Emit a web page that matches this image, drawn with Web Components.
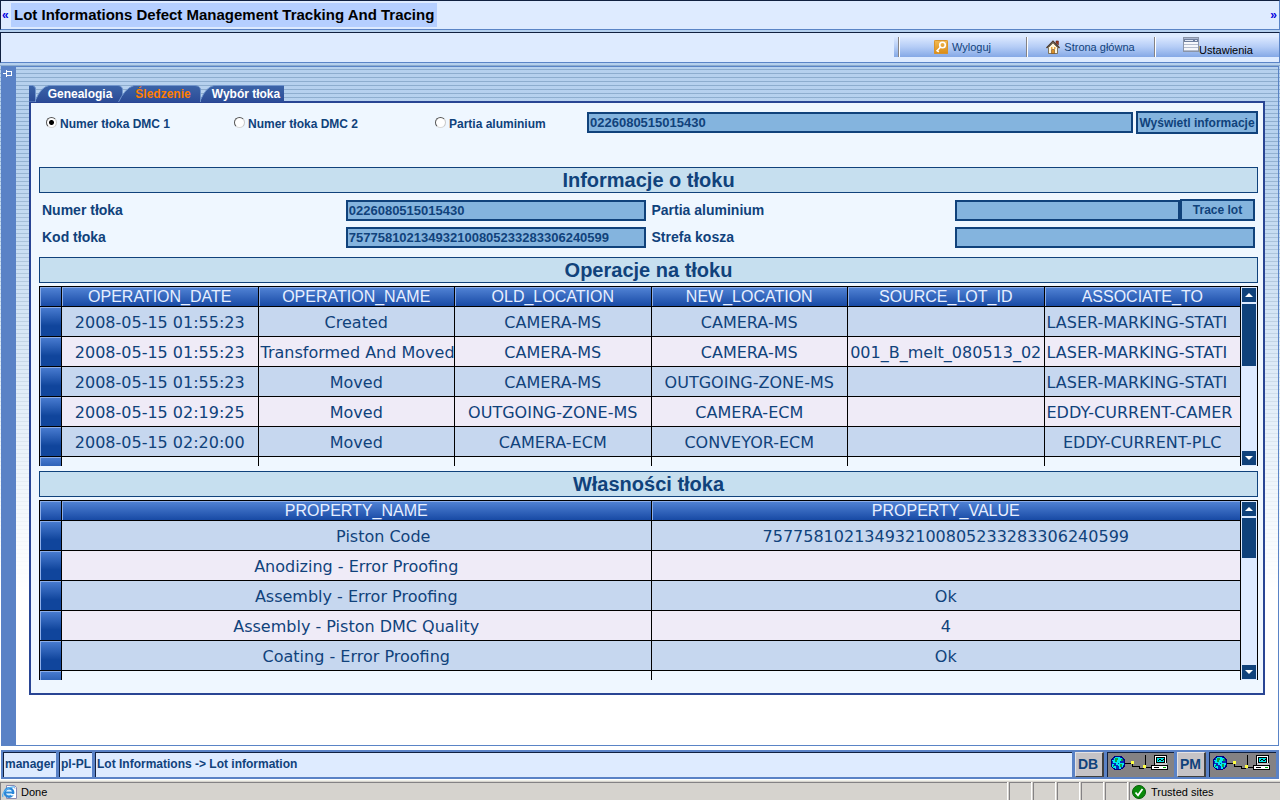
<!DOCTYPE html>
<html lang="pl">
<head>
<meta charset="utf-8">
<meta name="viewport" content="width=device-width, initial-scale=1">
<title>Lot Informations Defect Management Tracking And Tracing</title>
<style>
  :root {
    --ink: #10427b;
    --edge: #5a84c6;
    --dark: #102040;
    --pale: #deebff;
    --field: #84b4de;
  }
  html { height: 100%; }
  body {
    margin: 0;
    min-height: 100%;
    display: flex;
    flex-direction: column;
    font: 12px/16px "Liberation Sans", Arial, sans-serif;
    color: var(--ink);
    background-color: #fff;
    background-image:
      linear-gradient(rgba(255,255,255,0) 0, rgba(255,255,255,.05) 150px, rgba(255,255,255,.25) 230px, rgba(255,255,255,.7) 440px, #fff 590px),
      repeating-linear-gradient(rgba(80,120,160,0) 0, rgba(80,120,160,0) 1px, rgba(80,120,160,.42) 1px, rgba(80,120,160,.42) 2px, rgba(80,120,160,0) 2px, rgba(80,120,160,0) 4px),
      linear-gradient(#b4cfee, #b4d3ee);
    background-size: 100% 590px;
    background-repeat: no-repeat;
  }
</style>
</head>
<body>

<title-bar>Lot Informations Defect Management Tracking And Tracing</title-bar>
<tool-bar>
  <tool-link icon="key">Wyloguj</tool-link>
  <tool-link icon="home">Strona główna</tool-link>
  <tool-link icon="list" plain>Ustawienia</tool-link>
</tool-bar>

<work-area>
  <tab-strip></tab-strip>
  <lot-panel>
    <search-row></search-row>
    <section-title>Informacje o tłoku</section-title>
    <lot-fields></lot-fields>
    <section-title>Operacje na tłoku</section-title>
    <data-grid thumb="62">
      <script type="application/json">
      {"head":["OPERATION_DATE","OPERATION_NAME","OLD_LOCATION","NEW_LOCATION","SOURCE_LOT_ID","ASSOCIATE_TO"],
       "rows":[
        ["2008-05-15 01:55:23","Created","CAMERA-MS","CAMERA-MS","","LASER-MARKING-STATI"],
        ["2008-05-15 01:55:23","Transformed And Moved","CAMERA-MS","CAMERA-MS","001_B_melt_080513_02","LASER-MARKING-STATI"],
        ["2008-05-15 01:55:23","Moved","CAMERA-MS","OUTGOING-ZONE-MS","","LASER-MARKING-STATI"],
        ["2008-05-15 02:19:25","Moved","OUTGOING-ZONE-MS","CAMERA-ECM","","EDDY-CURRENT-CAMER"],
        ["2008-05-15 02:20:00","Moved","CAMERA-ECM","CONVEYOR-ECM","","EDDY-CURRENT-PLC"],
        ["","","","","",""]]}
      </script>
    </data-grid>
    <section-title class="next">Własności tłoka</section-title>
    <data-grid thumb="40">
      <script type="application/json">
      {"head":["PROPERTY_NAME","PROPERTY_VALUE"],
       "rows":[
        ["Piston Code","757758102134932100805233283306240599"],
        ["Anodizing - Error Proofing",""],
        ["Assembly - Error Proofing","Ok"],
        ["Assembly - Piston DMC Quality","4"],
        ["Coating - Error Proofing","Ok"],
        ["",""]]}
      </script>
    </data-grid>
  </lot-panel>
</work-area>

<info-bar></info-bar>
<status-bar></status-bar>

<script>
const icons = {
  key: `<svg width="14" height="14" viewBox="0 0 14 14"><defs><linearGradient id="g" x2="0" y2="1"><stop stop-color="#f3bc55"/><stop offset="1" stop-color="#d98a14"/></linearGradient></defs><rect width="14" height="14" rx="1" fill="url(#g)"/><rect x=".5" y=".5" width="13" height="13" rx="1" fill="none" stroke="#d8932c"/><circle cx="8.5" cy="5" r="2.8" fill="none" stroke="#fff" stroke-width="1.6"/><path d="M6.600 7 2.500 11.200M3.200 10.600l1.600 1.200" stroke="#fff" stroke-width="1.600" fill="none"/></svg>`,
  home: `<svg width="14" height="14" viewBox="0 0 14 14"><path d="M10 1h2.4v4L10 3z" fill="#a33a1c" stroke="#5d1f10" stroke-width=".6"/><path d="M2.5 7.5 7 3l4.500 4.500V13.500h-9z" fill="#fff6dc" stroke="#6c5a3a" stroke-width=".8"/><path d="M.5 8 7 1.300 13.500 8" fill="none" stroke="#4b3a2a" stroke-width="1.500"/><path d="M5 7h1.500v2H5zm3 0h1.500v2H8z" fill="#e9a53c"/><path d="M5.500 9.500h3v4h-3z" fill="#d9902a" stroke="#7a4a16" stroke-width=".6"/></svg>`,
  list: `<svg width="16" height="15" viewBox="0 0 16 15"><path fill="#8a94a8" d="M0 0h16v15H0z"/><path fill="#f6f7fb" d="M1 5h14v9H1z"/><path fill="#6f7f9e" d="M1 1h14v4H1z"/><path fill="#a9b6d0" d="M1 1h14v1H1z"/><path fill="#e4eaf6" d="M2 3h8v1H2zM12 3h2v1h-2z"/><path fill="#b4bccd" d="M1 7h14v1H1zm0 3h14v1H1zm0 3h14v1H1z"/></svg>`,
  link: `<svg width="60" height="17" viewBox="0 0 60 17" shape-rendering="crispEdges"><circle cx="8" cy="8" r="7" fill="#0828b8" stroke="#000080"/><path fill="#00e8f0" d="M5 2h5v1h2v3h-2v2H8v2H6V8H3V6H2V5h2V3h1zM9 8h5v2h-1v2h-2v2H9v-3H8V9h1zM2 9h2v2h2v3H5v-1H3v-1H2z"/><path fill="#10a040" d="M5 3h3v2H7v2H5zM10 9h2v3h-2zM11 4h2v2h-2zM3 10h1v2H3z"/><path d="M15 8.500h6M22.500 6v5.500H29v2h5M35.500 0v11M36 12.500h6" fill="none" stroke="#000"/><path fill="#ff4" d="M21 6h3v3h-3zM33 10h3v3h-3z"/><path fill="#fff" stroke="#000" d="M44.500.5h12v9h-12z"/><path fill="#c6c3c6" d="M45 8h12v2H45z"/><path fill="#00e0e0" stroke="#000" d="M46.500 2.500h8v5h-8z"/><path d="M48 6l2-2 2 2 2-2" fill="none" stroke="#000"/><path fill="#fff" stroke="#000" d="M41.500 10.500h16v4h-16z"/><path stroke="#000" d="M44 12.500h5"/><path fill="#0a0" d="M53 12h3v1h-3z"/></svg>`,
  check: `<svg width="14" height="14" viewBox="0 0 14 14"><circle cx="7" cy="7" r="6.500" fill="#0a8a0a" stroke="#065a06"/><path d="M3.500 7.500 6 10.300l4.500-6.300" fill="none" stroke="#fff" stroke-width="1.800"/></svg>`,
  page: `<svg width="16" height="16" viewBox="0 0 16 16"><path fill="#fff" stroke="#8a8ab0" d="M4.500 1.500h8l2 2v11h-10z"/><path fill="#b8b8d8" d="M12 2v2.500h2z"/><circle cx="7" cy="8.500" r="4.200" fill="#d8f0ff" stroke="#2a86d8" stroke-width="2.400"/><path d="M4 8.500h7" stroke="#2a86d8" stroke-width="1.800"/><path fill="#fff" d="M9 10h4v1.500H9z"/><path d="M1 13C-1 9 6 2 13 3" fill="none" stroke="#58b0f0" stroke-width="1.200"/></svg>`,
  pin: `<svg width="10" height="8" viewBox="0 0 10 8" shape-rendering="crispEdges"><path fill="none" stroke="#fff" d="M0 4.500h3M3.500 1v7M4 2.500h4.500v4H4"/></svg>`
};

function define(name, markup, setup) {
  const template = document.createElement('template');
  template.innerHTML = '<style>*{box-sizing:border-box}:host{box-sizing:border-box}</style>' + markup;
  customElements.define(name, class extends HTMLElement {
    connectedCallback() {
      if (this.shadowRoot) return;
      this.attachShadow({ mode: 'open' }).append(template.content.cloneNode(true));
      if (setup) setup(this, this.shadowRoot);
    }
  });
}

define('title-bar', `
<style>
  :host { display: flex; align-items: center; height: 30px; padding: 0 2px 0 1px; background: var(--pale); border: solid var(--edge); border-width: 1px; border-top-color: var(--dark); border-left-color: var(--dark); }
  a { color: #0000e0; text-decoration: none; font-size: 12px; font-weight: bold; width: 9px; }
  h1 { margin: 0; padding: 0 3px; font-size: 15px; line-height: 24px; color: #000; background: #b5cfff; }
  a:last-child { margin-left: auto; text-align: right; }
</style>
<a href="#prev">«</a><h1><slot></slot></h1><a href="#next">»</a>`);

define('tool-bar', `
<style>
  :host { display: flex; justify-content: flex-end; align-items: center; height: 31px; margin: 2px 0 3px; background: var(--pale); border: 1px solid var(--edge); border-top-color: var(--dark); border-left-color: var(--dark); }
  nav { display: flex; height: 20px; padding-left: 4px; margin-bottom: 1px; background: linear-gradient(#dbe8ff, #b4ccf6 50%, #84a8e6); }
</style>
<nav><slot></slot></nav>`);

define('tool-link', `
<style>
  :host { display: block; width: 128px; font-size: 11px; border-left: 1px solid #848284; box-shadow: inset 1px 0 #fff; }
  :host([plain]) { width: 125px; }
  a { display: flex; height: 20px; align-items: center; justify-content: center; gap: 4px; color: var(--ink); text-decoration: none; }
  :host([plain]) a { color: #000; gap: 0; align-items: flex-start; padding-left: 2px; }
  :host([plain]) span { padding-top: 5px; }
  svg { display: block; }
</style>
<a href="#"><i></i><span><slot></slot></span></a>`, (el, root) => {
  root.querySelector('i').innerHTML = icons[el.getAttribute('icon')];
});

define('work-area', `
<style>
  :host { display: flex; flex: 1; margin: 0 1px; border: solid var(--edge); border-width: 1px 1px 1px 0; }
  aside { width: 15px; background: #5a82c6; padding: 2px 2px; }
  main { flex: 1; min-width: 0; padding: 18px 13px 50px; }
  svg { display: block; }
</style>
<aside>${icons.pin}</aside><main><slot></slot></main>`);

define('tab-strip', `
<style>
  :host { display: block; position: relative; width: 255px; height: 16px; }
  svg { position: absolute; left: 0; top: 0; }
  div { position: relative; display: grid; grid-template-columns: 82px 86px 80px; padding-left: 7px; }
  button { border: 0; padding: 0; background: none; color: #fff; font: bold 12px/16px "Liberation Sans", Arial, sans-serif; white-space: nowrap; }
  button[aria-selected=true] { color: #ff7d00; padding-top: 1px; padding-left: 4px; }
  button:last-child { padding-left: 4px; }
  button:first-child { padding-left: 6px; }
</style>
<svg width="255" height="17" viewBox="0 0 255 17" aria-hidden="true">
  <defs><linearGradient id="t" x2="0" y2="1"><stop stop-color="#3c64a8"/><stop offset="1" stop-color="#2a4a96"/></linearGradient></defs>
  <g fill="url(#t)" stroke="#6f94cc">
    <path d="M-1 .5H3.500Q6.500 1 6.500 4V17H-1z"/>
    <path d="M6.500 18V15Q12 2 20 .5H89Q93.500 1 93.500 5V18z"/>
    <path d="M171.500 18V15Q177 2 185 .5H256V18z"/>
    <path d="M89 18Q96 3 105 .5H166Q171.500 1 171.500 5V18z"/>
  </g>
</svg>
<div role="tablist">
  <button role="tab">Genealogia</button><button role="tab" aria-selected="true">Śledzenie</button><button role="tab">Wybór tłoka</button>
</div>`);

define('lot-panel', `
<style>
  :host { display: block; padding: 8px 5px 13px 8px; background: #eff7ff; border: 2px solid #294594; }
</style>
<slot></slot>`);

const fieldCss = `
  input[type=text], button { height: 21px; margin: 0; border: 2px solid var(--ink); border-radius: 0; background: var(--field); color: var(--ink); outline: 0; }
  input[type=text] { min-width: 0; padding: 0 1px; font: bold 13px/17px "Liberation Sans", Arial, sans-serif; }
  button { padding: 0; font: bold 12px/16px "Liberation Sans", Arial, sans-serif; white-space: nowrap; }`;

define('search-row', `
<style>${fieldCss}
  :host { display: block; margin-bottom: 33px; }
  form { display: grid; grid-template-columns: 188px 201px 152px 1fr 122px; padding-left: 7px; align-items: center; }
  label { display: flex; align-items: center; gap: 3px; font-weight: bold; padding-top: 3px; }
  input[type=radio] { appearance: none; width: 11px; height: 11px; margin: 0 0 4px; border: 1px solid; border-color: #555 #c8c8c8 #d8d8d8 #555; border-radius: 50%; background: #fff; }
  input[type=radio]:checked { background: radial-gradient(circle, #000 2px, #fff 3px); }
  input[type=text] { margin-right: 3px; }
  button { height: 23px; }
</style>
<form>
  <label><input type="radio" name="kind" checked>Numer tłoka DMC 1</label>
  <label><input type="radio" name="kind">Numer tłoka DMC 2</label>
  <label><input type="radio" name="kind">Partia aluminium</label>
  <input type="text" aria-label="Numer" value="0226080515015430">
  <button type="button">Wyświetl informacje</button>
</form>`);

define('section-title', `
<style>
  :host { display: block; border: 1px solid var(--ink); background: #c6dfef; }
  :host(.next) { margin-top: 5px; }
  h2 { margin: 0; font-size: 20px; line-height: 24px; text-align: center; }
</style>
<h2><slot></slot></h2>`);

define('lot-fields', `
<style>${fieldCss}
  :host { display: grid; grid-template-columns: repeat(4, 1fr); row-gap: 6px; align-items: end; padding: 6px 0 9px; }
  label { padding-left: 3px; font-size: 14px; line-height: 21px; font-weight: bold; }
  div { display: flex; align-items: flex-end; padding: 0 3px 0 2px; }
  input[type=text] { flex: 1; }
  button { width: 75px; height: 22px; }
</style>
<label for="a">Numer tłoka</label><div><input type="text" id="a" value="0226080515015430"></div>
<label for="b">Partia aluminium</label><div><input type="text" id="b"><button type="button">Trace lot</button></div>
<label for="c">Kod tłoka</label><div><input type="text" id="c" value="757758102134932100805233283306240599"></div>
<label for="d">Strefa kosza</label><div><input type="text" id="d"></div>`);

define('data-grid', `
<style>
  :host { display: flex; height: 180px; margin-top: 3px; overflow: hidden; }
  .view { flex: 1; min-width: 0; overflow: hidden; }
  table { width: 100%; table-layout: fixed; border-collapse: separate; border-spacing: 0; }
  th, td { padding: 0 2px; border: solid #000; border-width: 1px 0 0 1px; overflow: hidden; white-space: nowrap; text-align: center; font-weight: normal; }
  thead th { height: 20px; padding-top: 1px; font-size: 16px; line-height: 18px; color: #e7efff; background: linear-gradient(#5284d6, #184aa5); box-shadow: inset 1px 1px #8cade7; }
  td { height: 30px; padding-top: 2px; font: 16px/27px "DejaVu Sans", Verdana, sans-serif; }
  td.long { text-align: left; }
  td.indent { padding-left: 56px; }
  tbody tr:nth-child(odd) { background: #c6d7ef; }
  tbody tr:nth-child(even) { background: #efebf7; }
  tbody tr:last-child { background: none; }
  tbody th { height: 30px; background: linear-gradient(#4a7dd2, #10459c 65%, #10459c); box-shadow: inset 1px 1px #8cade7; }
  .mark { width: 22px; }
  .bar { width: 18px; display: flex; flex-direction: column; gap: 2px; padding: 1px; border: solid #000; border-width: 1px 1px 0; background: var(--pale); }
  .bar button { height: 14px; padding: 0; border: 0; background: var(--ink); display: flex; align-items: center; justify-content: center; }
  .bar button:last-child { margin-top: auto; }
  .thumb { background: var(--ink); }
  svg { display: block; }
</style>
<div class="view"><table><thead></thead><tbody></tbody></table></div>
<div class="bar">
  <button type="button" aria-label="Up"><svg width="8" height="4"><path d="M0 4 4 0l4 4z" fill="#fff"/></svg></button>
  <div class="thumb"></div>
  <button type="button" aria-label="Down"><svg width="8" height="4"><path d="M0 0h8L4 4z" fill="#fff"/></svg></button>
</div>`, (el, root) => {
  const data = JSON.parse(el.querySelector('script').textContent);
  const kind = t => /^[A-Z-]{18,}$/.test(t) ? 'long' : t === 'Piston Code' ? 'indent' : '';
  root.querySelector('thead').innerHTML = '<tr><th class="mark"></th>' + data.head.map(t => `<th scope="col">${t}</th>`).join('') + '</tr>';
  root.querySelector('tbody').innerHTML = data.rows.map(r => '<tr><th></th>' + r.map(t => `<td class="${kind(t)}">${t}</td>`).join('') + '</tr>').join('');
  root.querySelector('.thumb').style.height = el.getAttribute('thumb') + 'px';
});

define('info-bar', `
<style>
  :host { display: flex; gap: 3px; height: 29px; margin: 4px 1px 1px; padding: 2px 3px 2px 2px; background: #5a82c6; font-weight: bold; }
  span { padding: 0 1px; line-height: 23px; background: var(--pale); border: solid var(--dark); border-width: 1px 0 0 1px; white-space: nowrap; }
  .path { flex: 1; }
  .tag { width: 29px; padding: 0 2px; font-size: 14px; background: #c6c3c6; border: 1px solid; border-color: #e4e2e4 #404040 #404040 #e4e2e4; border-right-width: 2px; }
  .net { width: 67px; padding: 2px 0 0 2px; background: #848284; }
  svg { display: block; }
</style>
<span>manager</span><span>pl-PL</span><span class="path">Lot Informations -&gt; Lot information</span>
<span class="tag">DB</span><span class="net">${icons.link}</span>
<span class="tag">PM</span><span class="net">${icons.link}</span>`);

define('status-bar', `
<style>
  :host { display: flex; gap: 2px; height: 20px; padding-top: 1px; background: #d6d3ce; color: #000; font-size: 11px; border-top: 1px solid #efefe8; }
  span { width: 22px; display: flex; align-items: center; gap: 5px; border: solid #848284; border-width: 1px 0 0 1px; box-shadow: 1px 0 #fff; }
  .done { flex: 1; gap: 3px; padding-left: 1px; }
  .zone { width: 151px; padding-left: 2px; }
</style>
<span class="done">${icons.page}Done</span><span></span><span></span><span></span><span></span><span></span>
<span class="zone">${icons.check}Trusted sites</span>`);
</script>
</body>
</html>
